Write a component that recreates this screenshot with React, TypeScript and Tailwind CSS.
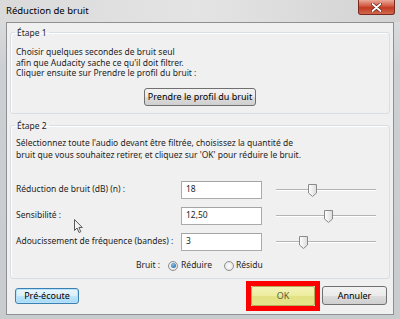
import React from 'react'

const Thumb = ({ left }: { left: number }) => (
  <svg
    className="absolute top-[-7px]"
    style={{ left: left - 5 }}
    width="11"
    height="15"
    viewBox="0 0 11 15"
  >
    <defs>
      <linearGradient id="th" x1="0" y1="0" x2="1" y2="0">
        <stop offset="0" stopColor="#ffffff" />
        <stop offset="1" stopColor="#dcdcdc" />
      </linearGradient>
    </defs>
    <path d="M1.5 1.5 h8 v8.5 l-4 3.5 l-4 -3.5 z" fill="url(#th)" stroke="#8a8a8a" strokeLinejoin="round" />
  </svg>
)

const Slider = ({ pos }: { pos: number }) => (
  <div className="relative w-[100px] h-[2px] border-t border-[#b4b4b4] border-b border-b-white">
    <Thumb left={pos} />
  </div>
)

const Btn = ({ children, className = '' }: { children: React.ReactNode; className?: string }) => (
  <button
    className={`flex items-center justify-center whitespace-nowrap rounded-[3px] border border-[#707070] bg-[linear-gradient(#f2f2f2_0%,#ebebeb_50%,#dddddd_51%,#cfcfcf_100%)] text-[9px] text-black ${className}`}
  >
    {children}
  </button>
)

const Row = ({ label, value, pos }: { label: string; value: string; pos: number }) => (
  <div className="flex items-center h-[18px]">
    <span className="w-[170px] pl-[5px] whitespace-nowrap">{label}</span>
    <div className="w-[81px] h-[18px] bg-white border border-[#ababab] border-t-[#a4a4a4] pl-[4px] flex items-center">
      {value}
    </div>
    <div className="ml-[14px]">
      <Slider pos={pos} />
    </div>
  </div>
)

const Radio = ({ checked }: { checked?: boolean }) => (
  <span className="w-[10px] h-[10px] rounded-full border border-[#8f8f8f] bg-[radial-gradient(#ffffff,#dcdcdc)] flex items-center justify-center">
    {checked && <span className="w-[5px] h-[5px] rounded-full bg-[radial-gradient(circle_at_40%_35%,#7fc0ee,#1c5f9b)]" />}
  </span>
)

export default function App() {
  return (
    <div
      className="relative w-[400px] h-[319px] flex flex-col bg-[linear-gradient(#e0e0e0,#cdd0d3_20%,#c9cccf)] text-[8.5px] text-[#1e1e1e] overflow-hidden"
      style={{ fontFamily: '"Noto Sans", "Open Sans", sans-serif' }}
    >
      <div className="h-[22px] flex items-center pl-[6px] text-[9.5px] text-black shrink-0 bg-[linear-gradient(90deg,#dadada,#e4e4e4_50%,#d2d2d2)]">
        Réduction de bruit
      </div>
      <div className="absolute right-[5px] top-0 w-[37px] h-[15px] rounded-b-[3px] border border-t-0 border-[#7a2a20] bg-[linear-gradient(#e9a99a,#d2553e_45%,#c23a20_55%,#d06a50)] flex items-center justify-center">
        <svg width="11" height="9" viewBox="0 0 11 9">
          <path d="M1.5 1 L9.5 8 M9.5 1 L1.5 8" stroke="#5a2015" strokeWidth="3.2" strokeLinecap="round" />
          <path d="M1.5 1 L9.5 8 M9.5 1 L1.5 8" stroke="#ffffff" strokeWidth="1.8" strokeLinecap="round" />
        </svg>
      </div>

      <div className="mx-[6px] mb-[4px] flex-1 border border-[#8e9093] bg-[#f0f0f0] px-[3px] pt-[3px] flex flex-col">
        <fieldset className="border border-[#d5dfe5] rounded-[3px] pb-[7px] shadow-[inset_1px_1px_0_#fff]">
          <legend className="ml-[4px] px-[2px] leading-[13px]">Étape 1</legend>
          <div className="pl-[5px] pt-[8px] leading-[10.5px]">
            <p>Choisir quelques secondes de bruit seul</p>
            <p>afin que Audacity sache ce qu'il doit filtrer.</p>
            <p>Cliquer ensuite sur Prendre le profil du bruit :</p>
          </div>
          <div className="flex justify-center mt-[9px]">
            <Btn className="w-[112px] h-[18px]">Prendre le profil du bruit</Btn>
          </div>
        </fieldset>

        <fieldset className="mt-[5px] border border-[#d5dfe5] rounded-[3px] pb-[5px] shadow-[inset_1px_1px_0_#fff]">
          <legend className="ml-[4px] px-[2px] leading-[13px]">Étape 2</legend>
          <div className="pl-[5px] pt-[5px] leading-[12.5px]">
            <p>Sélectionnez toute l'audio devant être filtrée, choisissez la quantité de</p>
            <p>bruit que vous souhaitez retirer, et cliquez sur 'OK' pour réduire le bruit.</p>
          </div>
          <div className="mt-[19px] flex flex-col gap-[8px]">
            <Row label="Réduction de bruit (dB) (n) :" value="18" pos={36} />
            <Row label="Sensibilité :" value="12,50" pos={52} />
            <Row label="Adoucissement de fréquence (bandes) :" value="3" pos={27} />
          </div>
          <div className="mt-[8px] flex items-center h-[14px] pl-[125px]">
            <span>Bruit :</span>
            <span className="ml-[8px]"><Radio checked /></span>
            <span className="ml-[3px]">Réduire</span>
            <span className="ml-[12px]"><Radio /></span>
            <span className="ml-[2px]">Résidu</span>
          </div>
        </fieldset>

        <div className="flex items-center mt-[2px] pl-[5px]">
          <button className="w-[64px] h-[16px] rounded-[3px] border border-[#3c7fb1] bg-[linear-gradient(#eaf6fd,#d9f0fc_50%,#bee6fd_51%,#a7d9f5)] shadow-[inset_0_0_0_1px_#b6e3fb] flex items-center justify-center text-[9px] text-black">
            Pré-écoute
          </button>
          <div className="ml-auto border-[5px] border-[#ff0000] p-0">
            <div className="w-[64px] h-[20px] rounded-[2px] border border-[#b7ad58] bg-[linear-gradient(#f4f4b8,#ecec9e_50%,#e2e282_51%,#e4e48c)] flex items-center justify-center text-[9px] text-[#5c5c3a]">
              OK
            </div>
          </div>
          <Btn className="ml-[2px] mr-[3px] w-[65px] h-[19px]">Annuler</Btn>
        </div>
      </div>

      <svg className="absolute left-[74px] top-[219px]" width="10" height="15" viewBox="0 0 10 15">
        <path d="M0.5 0.5 L0.5 11.5 L3 9 L5 13.5 L6.8 12.7 L4.9 8.5 L8.3 8.5 Z" fill="#f4f4f4" stroke="#4a4a4a" strokeWidth="0.9" strokeLinejoin="round" />
      </svg>
    </div>
  )
}
